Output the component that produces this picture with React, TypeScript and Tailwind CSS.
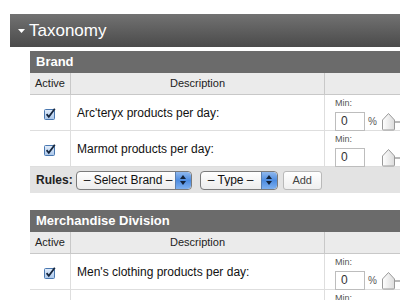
const font = "font-['Liberation_Sans','Helvetica',sans-serif]";

const CheckIcon = () => (
  <svg width="12" height="12" viewBox="0 0 12 12">
    <defs>
      <linearGradient id="cb" x1="0" y1="0" x2="0" y2="1">
        <stop offset="0" stopColor="#e4eefb" />
        <stop offset="1" stopColor="#a9c6ea" />
      </linearGradient>
    </defs>
    <rect x="0.5" y="1.5" width="10" height="10" rx="1" fill="url(#cb)" stroke="#4a78b0" />
    <path d="M2.6 6.2 L4.8 8.8 L10.8 0.8" fill="none" stroke="#15263e" strokeWidth="1.8" />
  </svg>
);

const SliderThumb = () => (
  <svg width="30" height="20" viewBox="0 0 30 20">
    <line x1="14" y1="11" x2="30" y2="11" stroke="#b9b9b9" strokeWidth="2" />
    <defs>
      <linearGradient id="th" x1="0" y1="0" x2="1" y2="0">
        <stop offset="0" stopColor="#ffffff" />
        <stop offset="1" stopColor="#dcdcdc" />
      </linearGradient>
    </defs>
    <path d="M1.5 9 L7.5 2.5 L13.5 9 L13.5 18 Q13.5 19 12.5 19 L2.5 19 Q1.5 19 1.5 18 Z" fill="url(#th)" stroke="#9a9a9a" />
  </svg>
);

const Stepper = () => (
  <div className="flex h-full w-[16px] flex-col items-center justify-center gap-[2px] rounded-r-[4px] bg-gradient-to-b from-[#8fb8ee] via-[#4d8ce0] to-[#7eb0ef] border-l border-[#5a7fb0]">
    <svg width="6" height="4" viewBox="0 0 6 4"><path d="M0 4 L3 0 L6 4 Z" fill="#13233a" /></svg>
    <svg width="6" height="4" viewBox="0 0 6 4"><path d="M0 0 L3 4 L6 0 Z" fill="#13233a" /></svg>
  </div>
);

const Select = ({ label, width }: { label: string; width: string }) => (
  <div className={`flex h-[19px] ${width} items-center overflow-hidden rounded-[4px] border border-[#7b7b7b] bg-gradient-to-b from-white to-[#ececec]`}>
    <span className="flex-1 truncate pl-[7px] text-[12px] leading-none text-[#111]">{label}</span>
    <Stepper />
  </div>
);

const Row = ({ text, percent }: { text: string; percent: boolean }) => (
  <div className="grid h-[36px] grid-cols-[41px_254px_1fr] border-b border-[#dedede] bg-white">
    <div className="flex items-center justify-center border-r border-[#dedede] pt-[1px]">
      <CheckIcon />
    </div>
    <div className="flex items-center border-r border-[#dedede] pl-[6px] text-[12px] text-[#111]">{text}</div>
    <div className="flex flex-col pl-[10px] pt-[3px]">
      <span className="text-[9px] leading-[10px] text-[#555]">Min:</span>
      <div className="mt-[3px] flex items-center">
        <div className="flex h-[19px] w-[30px] items-center border border-[#bdbdbd] pl-[5px] text-[12px] text-[#333]">0</div>
        <span className={`ml-[3px] w-[10px] text-[10px] text-[#555] ${percent ? "" : "invisible"}`}>%</span>
        <div className="ml-[3px]">
          <SliderThumb />
        </div>
      </div>
    </div>
  </div>
);

const Section = ({ title, rows, rules }: { title: string; rows: { text: string; percent: boolean }[]; rules?: boolean }) => (
  <div className="ml-[20px] w-[400px]">
    <div className="flex h-[22px] items-center bg-[#6b6b6b] pl-[6px] text-[13px] font-bold text-white">{title}</div>
    <div className="grid h-[22px] grid-cols-[41px_254px_1fr] border-b border-[#c8c8c8] bg-[#ebebeb] text-[11px] text-[#222]">
      <div className="flex items-center justify-center border-r border-[#c8c8c8]">Active</div>
      <div className="flex items-center justify-center border-r border-[#c8c8c8]">Description</div>
      <div />
    </div>
    {rows.map((r) => (
      <Row key={r.text} text={r.text} percent={r.percent} />
    ))}
    {rules && (
      <div className="flex h-[26px] items-center bg-[#e3e3e3] pl-[6px]">
        <span className="text-[12px] font-bold text-[#222]">Rules:</span>
        <div className="ml-[3px]">
          <Select label="– Select Brand –" width="w-[116px]" />
        </div>
        <div className="ml-[8px]">
          <Select label="– Type –" width="w-[78px]" />
        </div>
        <button className="ml-[5px] flex h-[19px] w-[39px] items-center justify-center rounded-[3px] border border-[#b9b9b9] bg-gradient-to-b from-white to-[#efefef] text-[11px] text-[#444]">
          Add
        </button>
      </div>
    )}
  </div>
);

export default function App() {
  return (
    <div className={`h-[300px] w-[400px] overflow-hidden bg-white ${font}`}>
      <div className="w-[430px] pl-[10px] pt-[14px]">
        <div className="flex h-[33px] items-center bg-gradient-to-b from-[#727272] to-[#4b4b4b] pl-[8px]">
          <svg width="7" height="4" viewBox="0 0 7 4"><path d="M0 0 L7 0 L3.5 4 Z" fill="#fff" /></svg>
          <span className="ml-[4px] text-[17px] text-white">Taxonomy</span>
        </div>
        <div className="mt-[4px]">
          <Section
            title="Brand"
            rules
            rows={[
              { text: "Arc'teryx products per day:", percent: true },
              { text: "Marmot products per day:", percent: false },
            ]}
          />
        </div>
        <div className="mt-[17px]">
          <Section
            title="Merchandise Division"
            rows={[
              { text: "Men's clothing products per day:", percent: true },
              { text: "Women's clothing products per day:", percent: true },
            ]}
          />
        </div>
      </div>
    </div>
  );
}
